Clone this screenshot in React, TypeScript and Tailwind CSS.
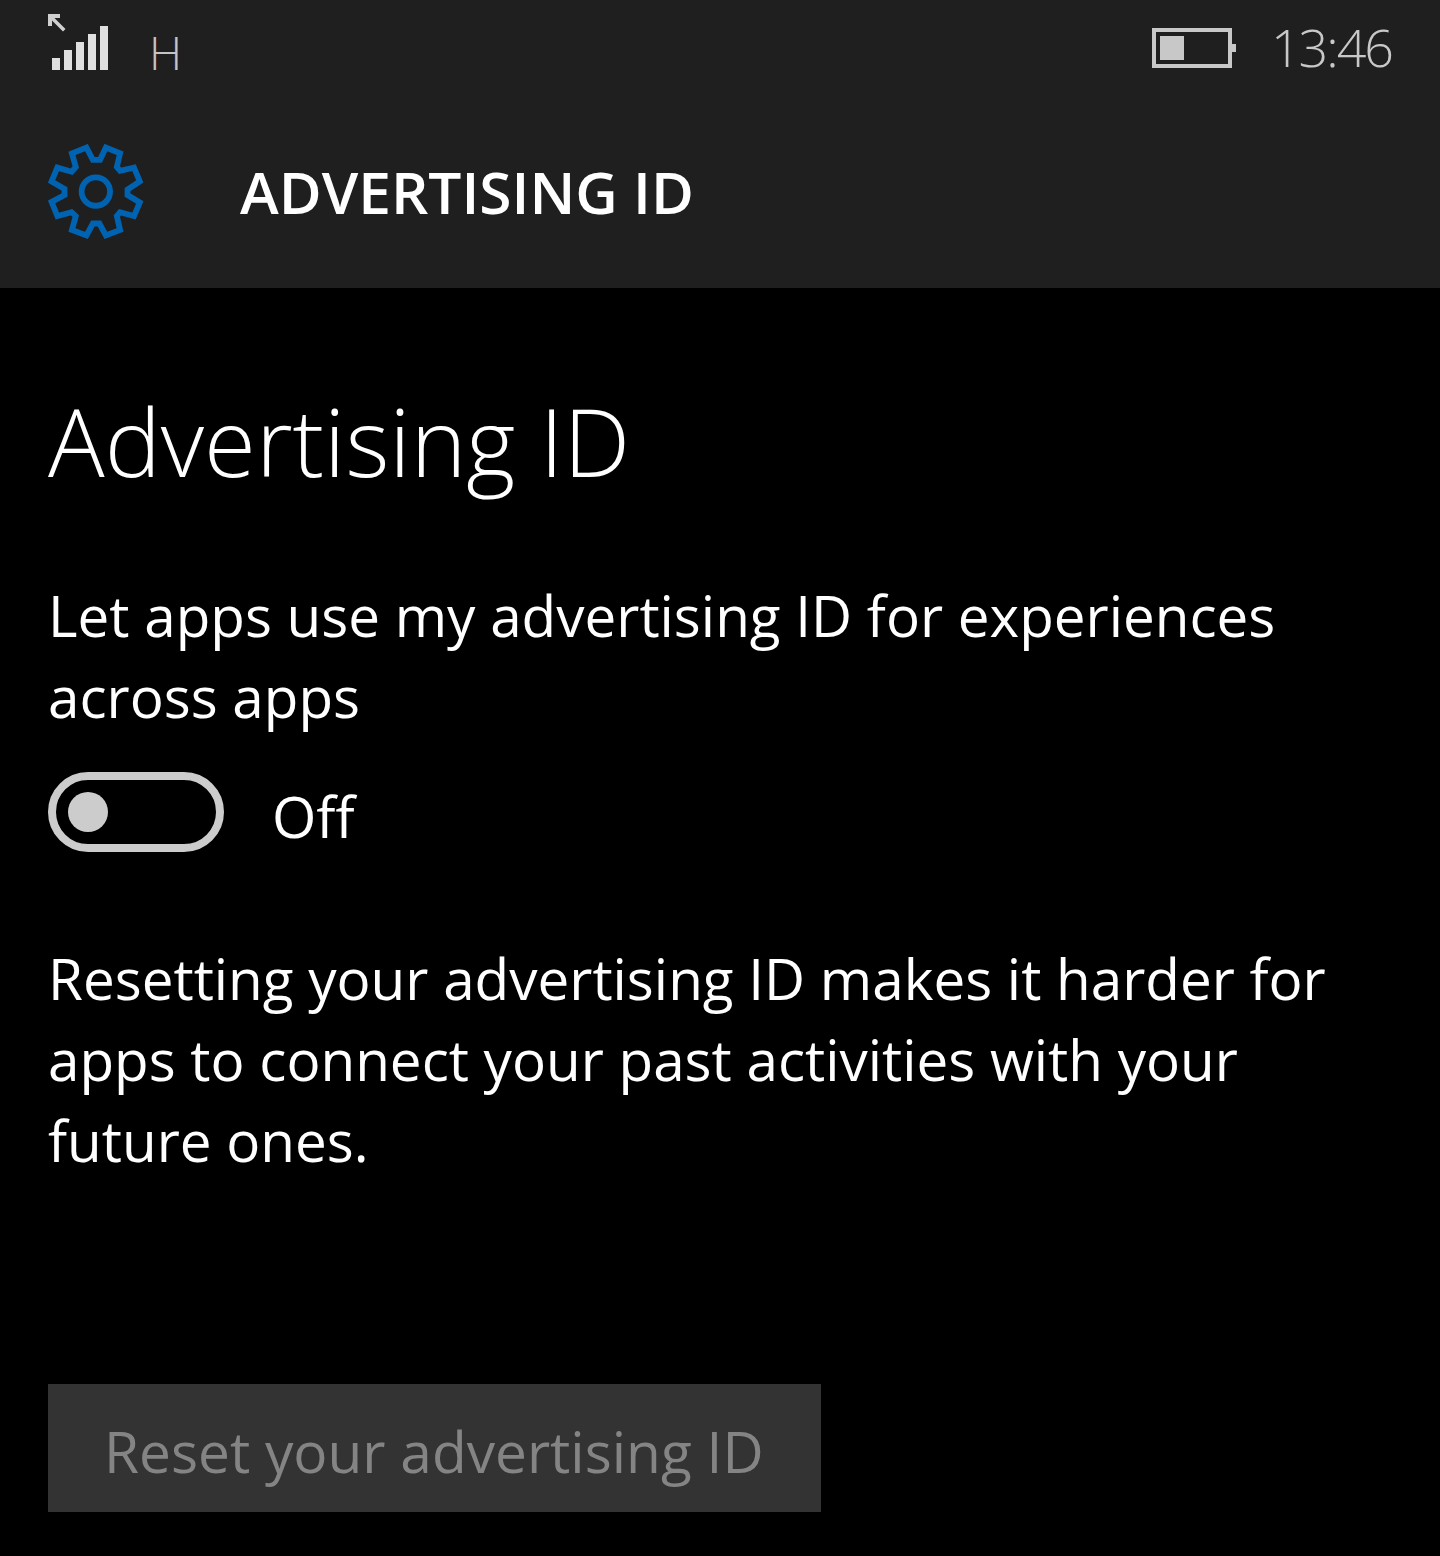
import React from "react";

const font = { fontFamily: '"Open Sans", sans-serif' };

function SignalIcon() {
  return (
    <svg width="64" height="60" viewBox="0 0 64 60" className="block">
      <path d="M2 2h12v4H8.500l11 11-2.500 2.500L6 8.500V14H2z" fill="#cfcfcf" />
      <g fill="#e0e0e0">
        <rect x="6" y="46" width="8" height="12" />
        <rect x="18" y="38" width="8" height="20" />
        <rect x="30" y="30" width="8" height="28" />
        <rect x="42" y="22" width="8" height="36" />
        <rect x="54" y="14" width="8" height="44" />
      </g>
    </svg>
  );
}

function BatteryIcon() {
  return (
    <svg width="86" height="40" viewBox="0 0 86 40" className="block">
      <rect x="2" y="2" width="76" height="36" fill="none" stroke="#c8c8c8" strokeWidth="4" />
      <rect x="8" y="8" width="24" height="24" fill="#c8c8c8" />
      <rect x="80" y="16" width="4" height="8" fill="#c8c8c8" />
    </svg>
  );
}

function GearIcon() {
  return (
    <svg width="96" height="96" viewBox="49 39 297 297" className="block">
      <path
        d="M188 88L168 50L123 68L135 110L122 125L78 112L60 155L100 178V197L60 218L78 262L122 250L135 262L123 305L168 322L188 285H208L228 322L272 305L262 262L272 250L315 262L333 220L295 197V180L333 155L315 112L272 122L262 110L272 68L228 50L210 88Z"
        fill="none"
        stroke="#0063b1"
        strokeWidth="18"
      />
      <circle cx="197" cy="186" r="44" fill="none" stroke="#0063b1" strokeWidth="18" />
    </svg>
  );
}

export default function App() {
  return (
    <div className="w-[1440px] h-[1556px] bg-black text-white overflow-hidden" style={font}>
      <header className="h-[288px] bg-[#1f1f1f]">
        <div className="flex items-start justify-between pl-[46px] pr-[48px] pt-[12px] h-[96px]">
          <div className="flex items-start">
            <SignalIcon />
            <span className="ml-[39px] mt-[12px] text-[46px] leading-[56px] font-[350] text-[#c4c4c4]">H</span>
          </div>
          <div className="flex items-start">
            <div className="mt-[16px]"><BatteryIcon /></div>
            <span className="ml-[33px] mt-[-1px] text-[52px] leading-[72px] font-[350] tracking-[-2px] text-[#c8c8c8]">13:46</span>
          </div>
        </div>
        <div className="flex items-center h-[192px] pl-[48px]">
          <GearIcon />
          <h2 className="ml-[96px] mt-[-3px] text-[58.6px] leading-[80px] font-semibold">ADVERTISING ID</h2>
        </div>
      </header>

      <main className="px-[48px]">
        <h1 className="mt-[93px] text-[94.3px] leading-[120px] font-[350]">Advertising ID</h1>
        <p className="mt-[74px] w-[1300px] text-[56.6px] leading-[81px]">
          Let apps use my advertising ID for experiences across apps
        </p>
        <div className="mt-[31px] flex items-center">
          <div className="w-[176px] h-[80px] rounded-full border-[8px] border-[#cccccc] flex items-center pl-[12px]">
            <div className="w-[40px] h-[40px] rounded-full bg-[#cccccc]" />
          </div>
          <span className="ml-[48px] mt-[8px] text-[57px] leading-[80px]">Off</span>
        </div>
        <p className="mt-[82px] w-[1300px] text-[56.6px] leading-[81px]">
          Resetting your advertising ID makes it harder for apps to connect your past activities with your future ones.
        </p>
        <button className="mt-[203px] block w-[773px] h-[128px] bg-[#333333] text-left pl-[56px] pt-[6px] text-[56.8px] leading-[122px] text-[#848484]">
          Reset your advertising ID
        </button>
      </main>
    </div>
  );
}
